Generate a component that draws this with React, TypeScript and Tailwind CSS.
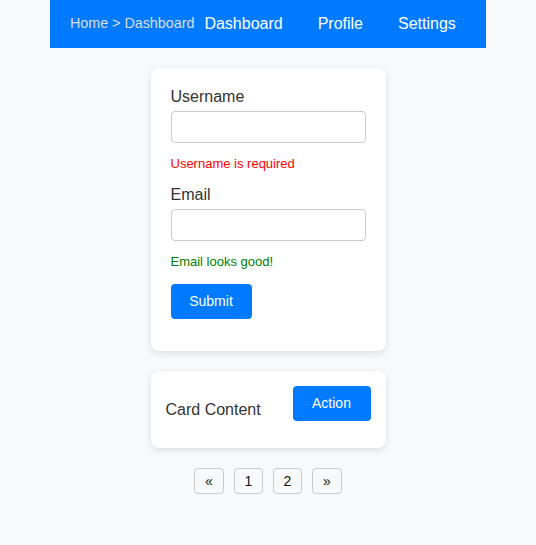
export default function App(): JSX.Element {
  return (
    <div
      className="min-h-[545px] w-full bg-[#f8f9fa] text-[#333]"
      style={{ fontFamily: '"Liberation Sans", Arial, sans-serif' }}
    >
      {/* Top bar */}
      <nav className="mx-auto flex h-12 w-[436px] items-center bg-[#007bff] pl-5">
        <span className="text-[14.3px] text-[#ddd]">Home &gt; Dashboard</span>
        <div className="ml-[10px] flex items-center gap-[35px] text-[16px] text-white">
          <span>Dashboard</span>
          <span>Profile</span>
          <span>Settings</span>
        </div>
      </nav>

      <div className="flex flex-col items-center pt-5">
        {/* Form card */}
        <form className="flex w-[235px] flex-col rounded-lg bg-white px-5 pb-8 pt-5 shadow-[0_2px_6px_rgba(0,0,0,0.12)]">
          <label className="text-[16px] leading-[18px]">Username</label>
          <input className="mt-[5px] h-8 w-full rounded border border-[#ccc] bg-white px-2 text-[14px] outline-none" />
          <span className="mt-[13px] text-[13px] leading-[15px] text-[#ff0000]">
            Username is required
          </span>
          <label className="mt-[15px] text-[16px] leading-[18px]">Email</label>
          <input className="mt-[5px] h-8 w-full rounded border border-[#ccc] bg-white px-2 text-[14px] outline-none" />
          <span className="mt-[13px] text-[13px] leading-[15px] text-[#008000]">
            Email looks good!
          </span>
          <button
            type="button"
            className="mt-[15px] h-[35px] w-[81px] rounded bg-[#007bff] text-[14px] text-white"
          >
            Submit
          </button>
        </form>

        {/* Content card */}
        <div className="mt-5 flex w-[235px] items-center justify-between rounded-lg bg-white p-[15px] shadow-[0_2px_6px_rgba(0,0,0,0.12)]">
          <span className="text-[16px]">Card Content</span>
          <button
            type="button"
            className="mb-3 h-[35px] w-[78px] rounded bg-[#007bff] text-[14px] text-white"
          >
            Action
          </button>
        </div>

        {/* Pagination */}
        <div className="mt-5 flex gap-[10px]">
          {['«', '1', '2', '»'].map((p, i) => (
            <button
              key={i}
              type="button"
              className={`h-[26px] ${
                i === 0 || i === 3 ? 'w-[30px]' : 'w-[29px]'
              } rounded border border-[#ccc] bg-[#f8f9fa] text-[14px] text-[#111]`}
            >
              {p}
            </button>
          ))}
        </div>
      </div>
    </div>
  )
}
